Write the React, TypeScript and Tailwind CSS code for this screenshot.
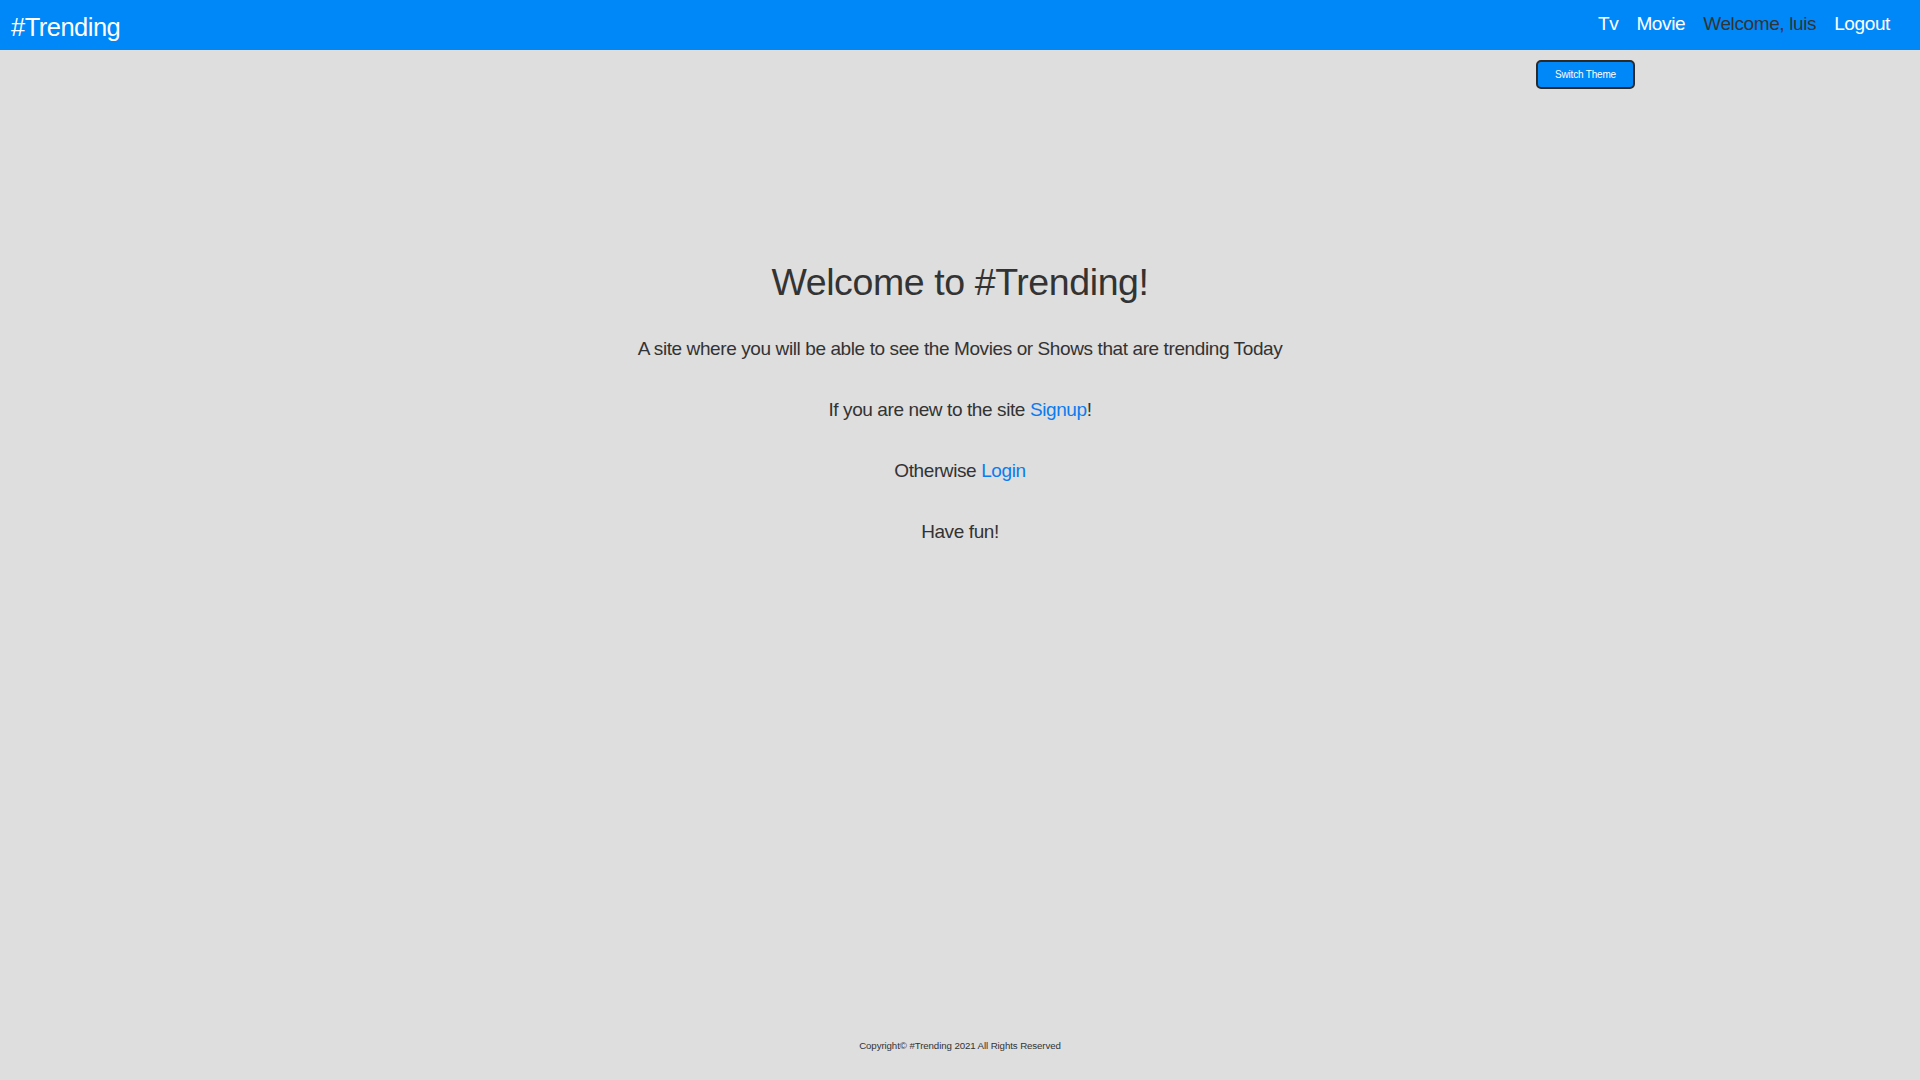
const font = { fontFamily: '"Liberation Sans", Arial, sans-serif' }

function NavBar() {
  return (
    <nav className="h-[50px] bg-[#0088f8] flex items-center justify-between pl-[11px] pr-[30px]">
      <a className="text-white text-[25.5px] leading-[50px] tracking-[-0.02em] pt-[4px]">#Trending</a>
      <ul className="flex items-center gap-[18px] text-[19px] leading-[50px] tracking-[-0.02em] pb-[2px]">
        <li className="text-white">Tv</li>
        <li className="text-white">Movie</li>
        <li className="text-[#333333]">Welcome, luis</li>
        <li className="text-white">Logout</li>
      </ul>
    </nav>
  )
}

export default function App() {
  return (
    <div style={font} className="min-h-screen bg-[#dedede] text-[#333333] flex flex-col">
      <NavBar />

      <div className="flex justify-end pr-[285px] mt-[10px]">
        <button className="w-[99px] h-[29px] bg-[#0088f8] text-white text-[10px] tracking-[-0.02em] border-2 border-[#2a2a2a] rounded-[5px]">
          Switch Theme
        </button>
      </div>

      <main className="flex flex-col items-center text-center tracking-[-0.025em]">
        <h1 className="mt-[169px] text-[37.5px] leading-[48px]">Welcome to #Trending!</h1>
        <p className="mt-[28px] text-[19px] leading-[30px]">
          A site where you will be able to see the Movies or Shows that are trending Today
        </p>
        <p className="mt-[31px] text-[19px] leading-[30px]">
          If you are new to the site <a className="text-[#0a7cf0]">Signup</a>!
        </p>
        <p className="mt-[31px] text-[19px] leading-[30px]">
          Otherwise <a className="text-[#0a7cf0]">Login</a>
        </p>
        <p className="mt-[31px] text-[19px] leading-[30px]">Have fun!</p>
      </main>

      <div className="flex-1" />

      <footer className="text-center text-[9.7px] leading-[20px] pb-[24px] tracking-[-0.01em]">
        Copyright© #Trending 2021 All Rights Reserved
      </footer>
    </div>
  )
}
